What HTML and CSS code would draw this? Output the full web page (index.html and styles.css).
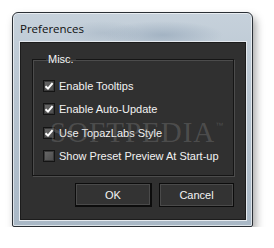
FILE: index.html
```html
<!DOCTYPE html>
<html lang="en">
<head>
  <meta charset="UTF-8">
  <title>Preferences</title>
  <link rel="stylesheet" href="styles.css">
</head>
<body>
  <div class="window">
    <div class="titlebar">
      <span class="title">Preferences</span>
    </div>
    <div class="client">
      <fieldset class="group">
        <legend>Misc.</legend>
        <label class="check"><span class="box on"><svg viewBox="0 0 10 10"><path d="M1.5 5.2 L4 7.6 L8.6 2.2" /></svg></span>Enable Tooltips</label>
        <label class="check"><span class="box on"><svg viewBox="0 0 10 10"><path d="M1.5 5.2 L4 7.6 L8.6 2.2" /></svg></span>Enable Auto-Update</label>
        <label class="check"><span class="box on"><svg viewBox="0 0 10 10"><path d="M1.5 5.2 L4 7.6 L8.6 2.2" /></svg></span>Use TopazLabs Style</label>
        <label class="check"><span class="box"></span>Show Preset Preview At Start-up</label>
      </fieldset>
      <div class="buttons">
        <button class="btn btn-ok">OK</button>
        <button class="btn btn-cancel">Cancel</button>
      </div>
      <!-- watermark sitting over the client area -->
      <div class="watermark">SOFTPEDIA<sup>™</sup></div>
    </div>
  </div>
</body>
</html>
```

FILE: styles.css
```css
body {
  margin: 0;
  background-color: #ffffff;
  font-family: "Liberation Sans", Arial, sans-serif;
  font-size: 11px;
}

.window {
  margin: 12px 0 0 12px;
  width: 239px;
  height: 213px;
  border: 1px solid #2a2f35;
  border-radius: 6px 6px 2px 2px;
  background:
    radial-gradient(ellipse 60px 14px at 150px 22px, rgba(150, 168, 186, 0.7), transparent),
    radial-gradient(ellipse 40px 12px at 90px 20px, rgba(160, 176, 192, 0.5), transparent),
    linear-gradient(180deg, #c6d1db 0%, #b7c4d0 40%, #a9b8c6 100%);
  box-shadow: 3px 5px 9px rgba(0, 0, 0, 0.35), inset 0 0 0 1px rgba(255, 255, 255, 0.6);
  display: flex;
  flex-direction: column;
}

.titlebar {
  height: 28px;
  display: flex;
  align-items: center;
  padding-left: 7px;
}

.title {
  font-family: "Open Sans", "Noto Sans", sans-serif;
  font-size: 11.5px;
  color: #101010;
  margin-top: 2px;
}

.client {
  position: relative;
  margin: 0 5px 5px 6px;
  flex: 1;
  background-color: #303030;
  border: 1px solid #e4e9ee;
  box-shadow: inset 0 0 0 1px #1c1c1c;
  padding: 11px 12px 0 12px;
  color: #f0f0f0;
}

.group {
  margin: 0;
  padding: 8px 0 7px 10px;
  border: 1px solid #151515;
  box-shadow: 1px 1px 0 #4c4c4c, inset 1px 1px 0 #4c4c4c;
  display: flex;
  flex-direction: column;
}

.group legend {
  padding: 0 2px;
  margin-left: 3px;
  font-size: 11px;
  line-height: 13px;
  color: #f4f4f4;
}

.check {
  display: flex;
  align-items: center;
  gap: 4px;
  height: 23.5px;
  white-space: nowrap;
  font-size: 11px;
  color: #f2f2f2;
}

.box {
  width: 10px;
  height: 10px;
  border: 1px solid #141414;
  background: linear-gradient(135deg, #6a6a6a, #4a4a4a);
  box-shadow: inset 0 0 0 1px #3a3a3a;
  display: flex;
}

.box svg {
  width: 10px;
  height: 10px;
}

.box path {
  fill: none;
  stroke: #ffffff;
  stroke-width: 2;
}

.buttons {
  display: flex;
  justify-content: flex-end;
  gap: 7px;
  margin-top: 7px;
}

.btn {
  height: 24px;
  background-color: #333333;
  border: 1px solid #0c0c0c;
  box-shadow: inset 0 0 0 1px #4a4a4a;
  color: #f4f4f4;
  font-family: "Liberation Sans", Arial, sans-serif;
  font-size: 11px;
  padding: 0;
}

.btn-ok {
  width: 77px;
  border-width: 1px 2px 2px 1px;
}

.btn-cancel {
  width: 75px;
}

.watermark {
  position: absolute;
  left: 30px;
  top: 74px;
  font-family: "Liberation Serif", serif;
  font-size: 29px;
  letter-spacing: 1px;
  color: rgba(150, 150, 150, 0.3);
  pointer-events: none;
}

.watermark sup {
  font-size: 8px;
  font-family: "Liberation Sans", sans-serif;
  vertical-align: 14px;
}
```
